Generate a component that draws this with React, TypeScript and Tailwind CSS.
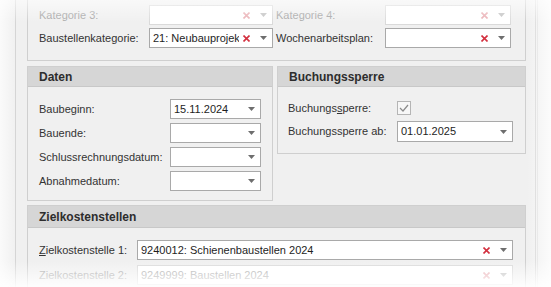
import React from 'react'

const font = { fontFamily: '"Liberation Sans", Arial, sans-serif' }

function Arrow({ disabled }: { disabled?: boolean }) {
  return (
    <svg width="7" height="4" viewBox="0 0 7 4" className="shrink-0">
      <path d="M0 0h7L3.5 4z" fill={disabled ? '#c4c4c4' : '#6e6e6e'} />
    </svg>
  )
}

function Clear({ disabled }: { disabled?: boolean }) {
  return (
    <svg width="7" height="7" viewBox="0 0 7 7" className="shrink-0">
      <path
        d="M0.5 0.5L6.5 6.5M6.5 0.5L0.5 6.5"
        stroke={disabled ? '#eab0b5' : '#d3303f'}
        strokeWidth="1.6"
      />
    </svg>
  )
}

function Combo({
  value,
  width,
  disabled,
  clear,
}: {
  value?: string
  width: string
  disabled?: boolean
  clear?: boolean
}) {
  return (
    <div
      className={`${width} h-[20px] flex items-center bg-white border pl-[3px] pr-[5px] ${
        disabled ? 'border-[#dadada] text-[#a9a9a9]' : 'border-[#a9a9a9] text-[#1e1e1e]'
      }`}
    >
      <span className="flex-1 min-w-0 overflow-hidden whitespace-nowrap text-clip">{value}</span>
      {clear && (
        <span className="ml-[4px] mr-[10px] flex items-center">
          <Clear disabled={disabled} />
        </span>
      )}
      <Arrow disabled={disabled} />
    </div>
  )
}

function Header({ title, tall }: { title: string; tall?: boolean }) {
  return (
    <div
      className={`${
        tall ? 'h-[22px]' : 'h-[20px]'
      } bg-[#d6d6d6] border-b border-[#c8c8c8] flex items-center pl-[11px] font-bold text-[12px] text-[#2d2d2d]`}
    >
      {title}
    </div>
  )
}

export default function App() {
  return (
    <div
      className="relative w-[551px] h-[287px] overflow-hidden bg-[#f0f0f0] text-[11px] text-[#333]"
      style={font}
    >
      <div className="flex h-full">
        <div className="w-[15px] shrink-0" />
        <div className="w-[521px] shrink-0 border-l border-r border-[#d4d4d4] pl-[11px] pr-[9px]">
          {/* top group */}
          <div className="border-l border-r border-b border-[#cfcfcf] h-[61px] pt-[5px] pl-[11px] flex flex-col gap-[3px]">
            <div className="flex items-center h-[20px]">
              <span className="w-[110px] text-[#a8a8a8]">Kategorie 3:</span>
              <Combo width="w-[124px]" disabled clear />
              <span className="w-[112px] pl-[3px] text-[#a8a8a8]">Kategorie 4:</span>
              <Combo width="w-[126px]" disabled clear />
            </div>
            <div className="flex items-center h-[20px]">
              <span className="w-[110px]">Baustellenkategorie:</span>
              <Combo width="w-[124px]" value="21: Neubauprojekt" clear />
              <span className="w-[112px] pl-[3px]">Wochenarbeitsplan:</span>
              <Combo width="w-[126px]" clear />
            </div>
          </div>

          {/* Daten + Buchungssperre */}
          <div className="flex gap-[4px] mt-[5px]">
            <div className="w-[246px] h-[135px] border border-[#cfcfcf]">
              <Header title="Daten" />
              <div className="pl-[11px] pt-[12px] flex flex-col gap-[4px]">
                {[
                  ['Baubeginn:', '15.11.2024'],
                  ['Bauende:', ''],
                  ['Schlussrechnungsdatum:', ''],
                  ['Abnahmedatum:', ''],
                ].map(([l, v]) => (
                  <div key={l} className="flex items-center h-[20px]">
                    <span className="w-[131px]">{l}</span>
                    <Combo width="w-[91px]" value={v} />
                  </div>
                ))}
              </div>
            </div>
            <div className="w-[249px] h-[88px] border border-[#cfcfcf]">
              <Header title="Buchungssperre" />
              <div className="pl-[10px] pt-[11px] flex flex-col gap-[3px]">
                <div className="flex items-center h-[20px]">
                  <span className="w-[109px]">
                    Buchungs<span className="underline">s</span>perre:
                  </span>
                  <div className="w-[14px] h-[14px] border border-[#b5b5b5] bg-[#f7f7f7] flex items-center justify-center">
                    <svg width="10" height="8" viewBox="0 0 10 8">
                      <path d="M1 4l3 3 5-6" stroke="#8a8a8a" strokeWidth="1.2" fill="none" />
                    </svg>
                  </div>
                </div>
                <div className="flex items-center h-[21px]">
                  <span className="w-[109px]">Buchungssperre ab:</span>
                  <Combo width="w-[116px] !h-[21px]" value="01.01.2025" />
                </div>
              </div>
            </div>
          </div>

          {/* Zielkostenstellen */}
          <div className="mt-[4px] border border-[#cfcfcf] h-[100px]">
            <Header title="Zielkostenstellen" tall />
            <div className="pl-[11px] pt-[12px] flex flex-col gap-[5px]">
              <div className="flex items-center h-[20px]">
                <span className="w-[98px]">
                  <span className="underline">Z</span>ielkostenstelle 1:
                </span>
                <Combo width="w-[376px]" value="9240012: Schienenbaustellen 2024" clear />
              </div>
              <div className="flex items-center h-[20px]">
                <span className="w-[98px] text-[#a8a8a8]">Zielkostenstelle 2:</span>
                <Combo width="w-[376px]" value="9249999: Baustellen 2024" disabled clear />
              </div>
            </div>
          </div>
        </div>
        <div className="w-px shrink-0" />
        <div className="w-px shrink-0 bg-[#dedede]" />
      </div>

      {/* edge fade of the screenshot */}
      <div className="pointer-events-none absolute inset-x-0 top-0 h-[22px] bg-gradient-to-b from-white/60 to-transparent" />
      <div className="pointer-events-none absolute inset-x-0 bottom-0 h-[26px] bg-gradient-to-t from-white/90 to-transparent" />
      <div className="pointer-events-none absolute inset-y-0 left-0 w-[16px] bg-gradient-to-r from-white/70 to-transparent" />
      <div className="pointer-events-none absolute inset-y-0 right-0 w-[24px] bg-gradient-to-l from-white/80 to-transparent" />
    </div>
  )
}
